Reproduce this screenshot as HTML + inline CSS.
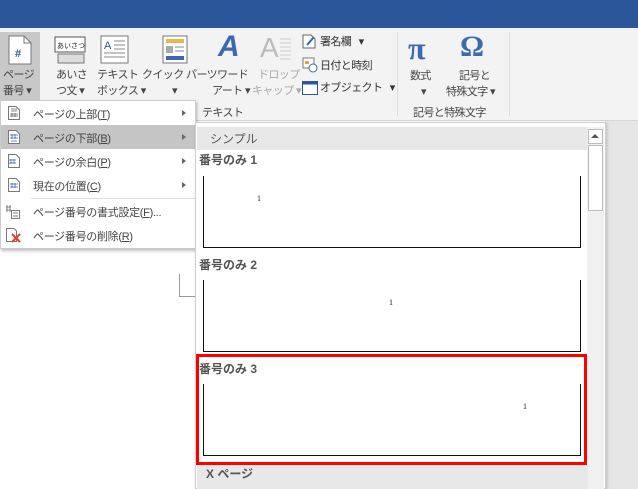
<!DOCTYPE html>
<html><head><meta charset="utf-8"><style>
*{margin:0;padding:0;box-sizing:border-box}
body{width:638px;height:489px;overflow:hidden;background:#fff;font-family:"Liberation Sans","Noto Sans CJK JP",sans-serif;font-size:11px;color:#444;position:relative}
.a{position:absolute}
.t{white-space:nowrap;line-height:14px}
.lbl{font-weight:bold;color:#555;font-size:12px}
.box{border-left:1.5px solid #111;border-right:1.5px solid #111;border-bottom:1.5px solid #111;background:#fff}
.num{font-family:"Liberation Serif",serif;font-size:8px;color:#222}
.mi{position:absolute;left:0;width:195px;height:24px}
.mi .tx{position:absolute;left:32px;top:5px;color:#444;letter-spacing:-0.3px}
.mi .ar{position:absolute;left:181px;top:9px;width:0;height:0;border-left:4px solid #666;border-top:3px solid transparent;border-bottom:3px solid transparent}
.ic{position:absolute;left:7px;top:5px}
.r{letter-spacing:-0.6px}
</style></head><body>
<div class="a" style="left:0;top:0;width:638px;height:28px;background:#2b579a"></div>
<div class="a" style="left:0;top:28px;width:638px;height:93px;background:#f3f3f3;border-bottom:1px solid #d6d6d6"></div>
<div class="a" style="left:0;top:32px;width:40px;height:68px;background:#c8c8c8"></div>
<svg class="a" style="left:8px;top:35px" width="24" height="30"><path d="M1 1H16L23 8V29H1Z" fill="#fff" stroke="#777"/><path d="M16 1V8H23" fill="none" stroke="#777"/><text x="7" y="22" font-size="11" font-weight="bold" fill="#2b579a" font-family="Liberation Sans">#</text></svg>
<div class="a t r" style="left:3px;top:68px">ページ</div>
<div class="a t r" style="left:3px;top:84px">番号 ▾</div>
<svg class="a" style="left:54px;top:35px" width="32" height="30"><rect x="1" y="2" width="30" height="15" fill="#fff" stroke="#555"/><rect x="4" y="19" width="26" height="9" fill="#ddd" stroke="#777"/><text x="3" y="13" font-size="7" fill="#222" font-family="Noto Sans CJK JP">あいさつ</text></svg>
<div class="a t r" style="left:56px;top:68px">あいさ</div>
<div class="a t r" style="left:56px;top:84px">つ文 ▾</div>
<svg class="a" style="left:100px;top:35px" width="30" height="30"><rect x="1" y="1" width="27" height="27" fill="#fff" stroke="#777"/><text x="4" y="14" font-size="11" fill="#2b579a" font-family="Liberation Sans">A</text><path d="M14 6H25M14 10H25M14 14H25M4 18H25M4 22H25" stroke="#888"/></svg>
<div class="a t r" style="left:97px;top:68px">テキスト</div>
<div class="a t r" style="left:97px;top:84px">ボックス ▾</div>
<svg class="a" style="left:162px;top:35px" width="26" height="30"><rect x="1" y="1" width="24" height="27" fill="#fff" stroke="#777"/><rect x="4" y="4" width="18" height="4" fill="#e8b84a"/><rect x="4" y="11" width="7" height="7" fill="#aaa"/><path d="M13 12H22M13 16H22" stroke="#888"/><rect x="4" y="21" width="18" height="4" fill="#3a6ab0"/></svg>
<div class="a t r" style="left:142px;top:68px">クイック パーツ</div>
<div class="a t" style="left:172px;top:84px">▾</div>
<div class="a" style="left:218px;top:30px;font-size:30px;font-style:italic;font-weight:bold;color:#3a6ab0;font-family:'Liberation Sans'">A</div>
<div class="a t r" style="left:217px;top:68px">ワード</div>
<div class="a t r" style="left:212px;top:84px">アート ▾</div>
<div class="a" style="left:260px;top:32px;font-size:28px;color:#bbb;font-family:'Liberation Sans'">A</div>
<svg class="a" style="left:280px;top:37px" width="12" height="26"><path d="M0 2H11M0 6H11M0 10H11M0 14H11M0 18H11M0 22H11" stroke="#ccc"/></svg>
<div class="a t r" style="left:258px;top:68px;color:#aaa">ドロップ</div>
<div class="a t r" style="left:252px;top:84px;color:#aaa">キャップ ▾</div>
<svg class="a" style="left:302px;top:34px" width="14" height="15"><path d="M1 1H9L13 5V14H1Z" fill="#fff" stroke="#666"/><path d="M5 11L12 3" stroke="#3a6ab0" stroke-width="2"/></svg>
<div class="a t r" style="left:320px;top:35px;color:#333">署名欄 &nbsp;&nbsp;▾</div>
<svg class="a" style="left:302px;top:57px" width="16" height="16"><rect x="1" y="1" width="11" height="10" fill="#fff" stroke="#777"/><rect x="3" y="4" width="4" height="3" fill="#e8a040"/><circle cx="11" cy="11" r="4" fill="#fff" stroke="#3a6ab0"/></svg>
<div class="a t r" style="left:320px;top:59px;color:#333">日付と時刻</div>
<svg class="a" style="left:302px;top:81px" width="16" height="14"><rect x="0.5" y="0.5" width="15" height="13" fill="#fff" stroke="#2b579a"/><rect x="0.5" y="0.5" width="15" height="3" fill="#2b579a"/></svg>
<div class="a t r" style="left:320px;top:81px;color:#333">オブジェクト &nbsp;&nbsp;▾</div>
<div class="a" style="left:397px;top:32px;width:1px;height:84px;background:#ddd"></div>
<div class="a" style="left:408px;top:30px;font-size:32px;font-weight:bold;color:#3a6ab0;font-family:'Liberation Serif',serif">π</div>
<div class="a t r" style="left:410px;top:69px">数式</div>
<div class="a t" style="left:421px;top:85px">▾</div>
<div class="a" style="left:460px;top:30px;font-size:30px;font-weight:bold;color:#3a6ab0;font-family:'Liberation Serif',serif">Ω</div>
<div class="a t r" style="left:459px;top:69px">記号と</div>
<div class="a t r" style="left:446px;top:85px">特殊文字 ▾</div>
<div class="a t r" style="left:413px;top:106px">記号と特殊文字</div>
<div class="a" style="left:509px;top:32px;width:1px;height:84px;background:#ddd"></div>
<div class="a t r" style="left:202px;top:106px">テキスト</div>
<div class="a" style="left:179px;top:274px;width:16px;height:23px;border-left:1px solid #999;border-bottom:1px solid #999"></div>
<div class="a" style="left:0;top:100px;width:196px;height:149px;background:#fff;border:1px solid #ccc;box-shadow:1px 2px 3px rgba(0,0,0,.25)">
<div class="mi" style="top:0"><svg class="ic" width="12" height="14"><path d="M.5 .5H8L11.5 4V13.5H.5Z" fill="#fff" stroke="#777"/><path d="M3 3H9M3 5H9M4 7V11M7 7V11M2 8H10M2 10H10" stroke="#666" stroke-width=".8"/></svg><span class="tx">ページの上部(<u>T</u>)</span><span class="ar"></span></div>
<div class="mi" style="top:24px;background:#c5c5c5"><svg class="ic" width="12" height="14"><path d="M.5 .5H8L11.5 4V13.5H.5Z" fill="#fff" stroke="#777"/><path d="M4 4V9M7 4V9M2 5H10M2 8H10M3 11H9" stroke="#3a6ab0" stroke-width=".8"/></svg><span class="tx">ページの下部(<u>B</u>)</span><span class="ar"></span></div>
<div class="mi" style="top:48px"><svg class="ic" width="12" height="14"><path d="M.5 .5H8L11.5 4V13.5H.5Z" fill="#fff" stroke="#777"/><path d="M3 5V10M6 5V10M1 6H8M1 9H8" stroke="#3a6ab0" stroke-width=".8"/></svg><span class="tx">ページの余白(<u>P</u>)</span><span class="ar"></span></div>
<div class="mi" style="top:72px"><svg class="ic" width="12" height="14"><path d="M.5 .5H8L11.5 4V13.5H.5Z" fill="#fff" stroke="#777"/><path d="M4 5V10M7 5V10M2 6H10M2 9H10" stroke="#3a6ab0" stroke-width=".8"/></svg><span class="tx">現在の位置(<u>C</u>)</span><span class="ar"></span></div>
<div class="a" style="left:30px;top:97px;width:164px;height:1px;background:#ddd"></div>
<div class="mi" style="top:98px"><svg class="ic" width="14" height="15" style="left:5px"><path d="M1 1V8M4 1V8M0 3H5M0 6H5" stroke="#666" stroke-width=".8"/><rect x="5.5" y="6.5" width="8" height="8" fill="#fff" stroke="#777"/><path d="M7 9H12M7 12H12" stroke="#777"/></svg><span class="tx">ページ番号の書式設定(<u>F</u>)...</span></div>
<div class="mi" style="top:122px"><svg class="ic" width="16" height="15" style="left:5px"><path d="M.5 .5H8L10.5 3V13.5H.5Z" fill="#fff" stroke="#777"/><path d="M6 6L14 14M14 6L6 14" stroke="#d9432f" stroke-width="2"/></svg><span class="tx">ページ番号の削除(<u>R</u>)</span></div>
</div>
<div class="a" style="left:605px;top:121px;width:33px;height:368px;background:#e6e6e6"></div>
<div class="a" style="left:195px;top:122px;width:411px;height:367px;background:#fff;border:1px solid #d0d0d0;box-shadow:1px 1px 3px rgba(0,0,0,.2)"></div>
<div class="a" style="left:197px;top:127px;width:391px;height:23px;background:#e8e8e8"></div>
<div class="a t" style="left:210px;top:132px;color:#555;font-size:12px">シンプル</div>
<div class="a" style="left:587px;top:127px;width:17px;height:362px;background:#f0f0f0"></div>
<div class="a" style="left:588px;top:129px;width:15px;height:15px;background:#fff;border:1px solid #bbb"></div>
<div class="a" style="left:591px;top:134px;width:0;height:0;border-bottom:4px solid #555;border-left:4px solid transparent;border-right:4px solid transparent"></div>
<div class="a" style="left:588px;top:145px;width:15px;height:66px;background:#fff;border:1px solid #bbb"></div>
<div class="a t lbl" style="left:199px;top:153px">番号のみ 1</div>
<div class="box a" style="left:203px;top:176px;width:378px;height:72px"></div>
<div class="a num" style="left:257px;top:194px">1</div>
<div class="a t lbl" style="left:199px;top:258px">番号のみ 2</div>
<div class="box a" style="left:203px;top:280px;width:378px;height:72px"></div>
<div class="a num" style="left:389px;top:298px">1</div>
<div class="a" style="left:196px;top:354px;width:391px;height:111px;border:3px solid #f00"></div>
<div class="a t lbl" style="left:199px;top:362px">番号のみ 3</div>
<div class="box a" style="left:203px;top:384px;width:378px;height:72px"></div>
<div class="a num" style="left:523px;top:402px">1</div>
<div class="a" style="left:197px;top:465px;width:391px;height:24px;background:#e8e8e8"></div>
<div class="a t lbl" style="left:206px;top:467px">X ページ</div>
</body></html>
